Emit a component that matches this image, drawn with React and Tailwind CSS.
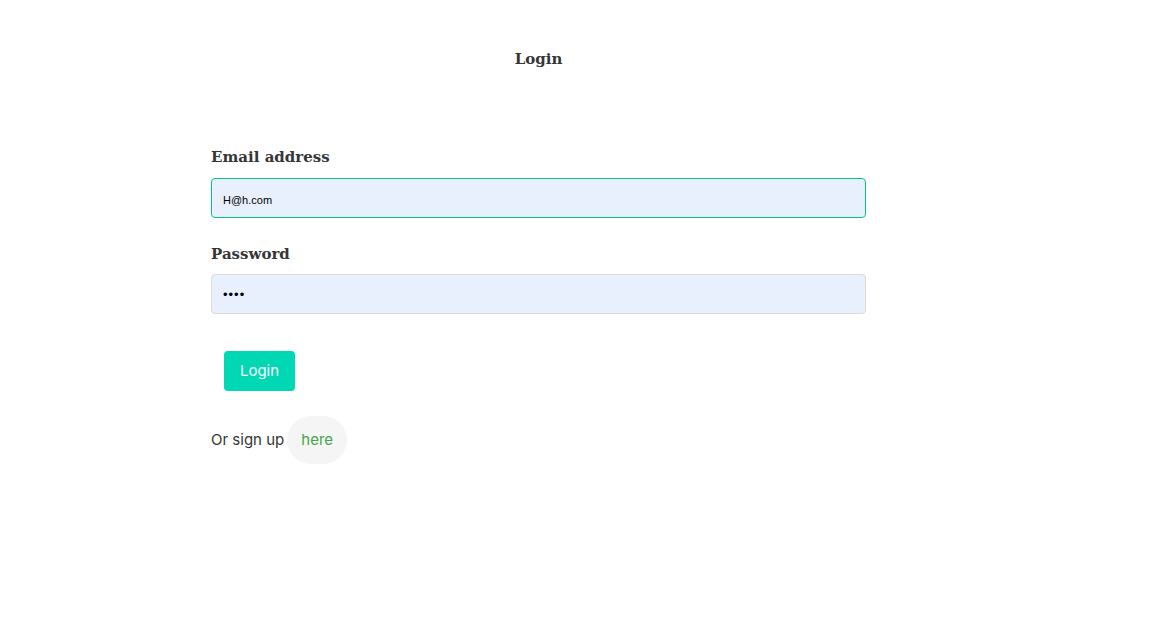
export default function App() {
  return (
    <div className="min-h-[641px] bg-white">
      <div className="ml-[211px] w-[655px] pt-[49px]">
        <h1 className="text-center text-[15px] font-bold leading-[20px] text-[#363636] font-['DejaVu_Serif',serif]">
          Login
        </h1>
        <form className="mt-[78px]" onSubmit={(e) => e.preventDefault()}>
          <label className="block text-[15px] font-bold leading-[20px] text-[#363636] font-['DejaVu_Serif',serif]">
            Email address
          </label>
          <input
            type="text"
            defaultValue="H@h.com"
            className="mt-[11px] block h-[40px] w-full rounded-[4px] border border-[#00c875] bg-[#e8f0fe] px-[11px] pt-[3px] text-[11px] text-black outline-none font-['Liberation_Sans',Arial,sans-serif]"
          />
          <label className="mt-[26px] block text-[15px] font-bold leading-[20px] text-[#363636] font-['DejaVu_Serif',serif]">
            Password
          </label>
          <input
            type="password"
            defaultValue="abcd"
            className="mt-[10px] block h-[40px] w-full rounded-[4px] border border-[#dbdbdb] bg-[#e8f0fe] px-[11px] text-[13px] tracking-[1px] text-black outline-none font-['Liberation_Sans',Arial,sans-serif]"
          />
          <div className="mt-[37px] pl-[13px]">
            <button
              type="submit"
              className="h-[40px] w-[71px] rounded-[4px] bg-[#00d8b4] text-[15px] text-white font-['Inter',sans-serif]"
            >
              Login
            </button>
          </div>
        </form>
        <div className="mt-[25px] flex items-center text-[15px] text-[#363636] font-['Inter',sans-serif]">
          <span>Or sign up</span>
          <span className="ml-[3px] flex h-[48px] w-[60px] items-center justify-center rounded-[24px] bg-[#f5f5f5] text-[#48a448]">
            here
          </span>
        </div>
      </div>
    </div>
  )
}
